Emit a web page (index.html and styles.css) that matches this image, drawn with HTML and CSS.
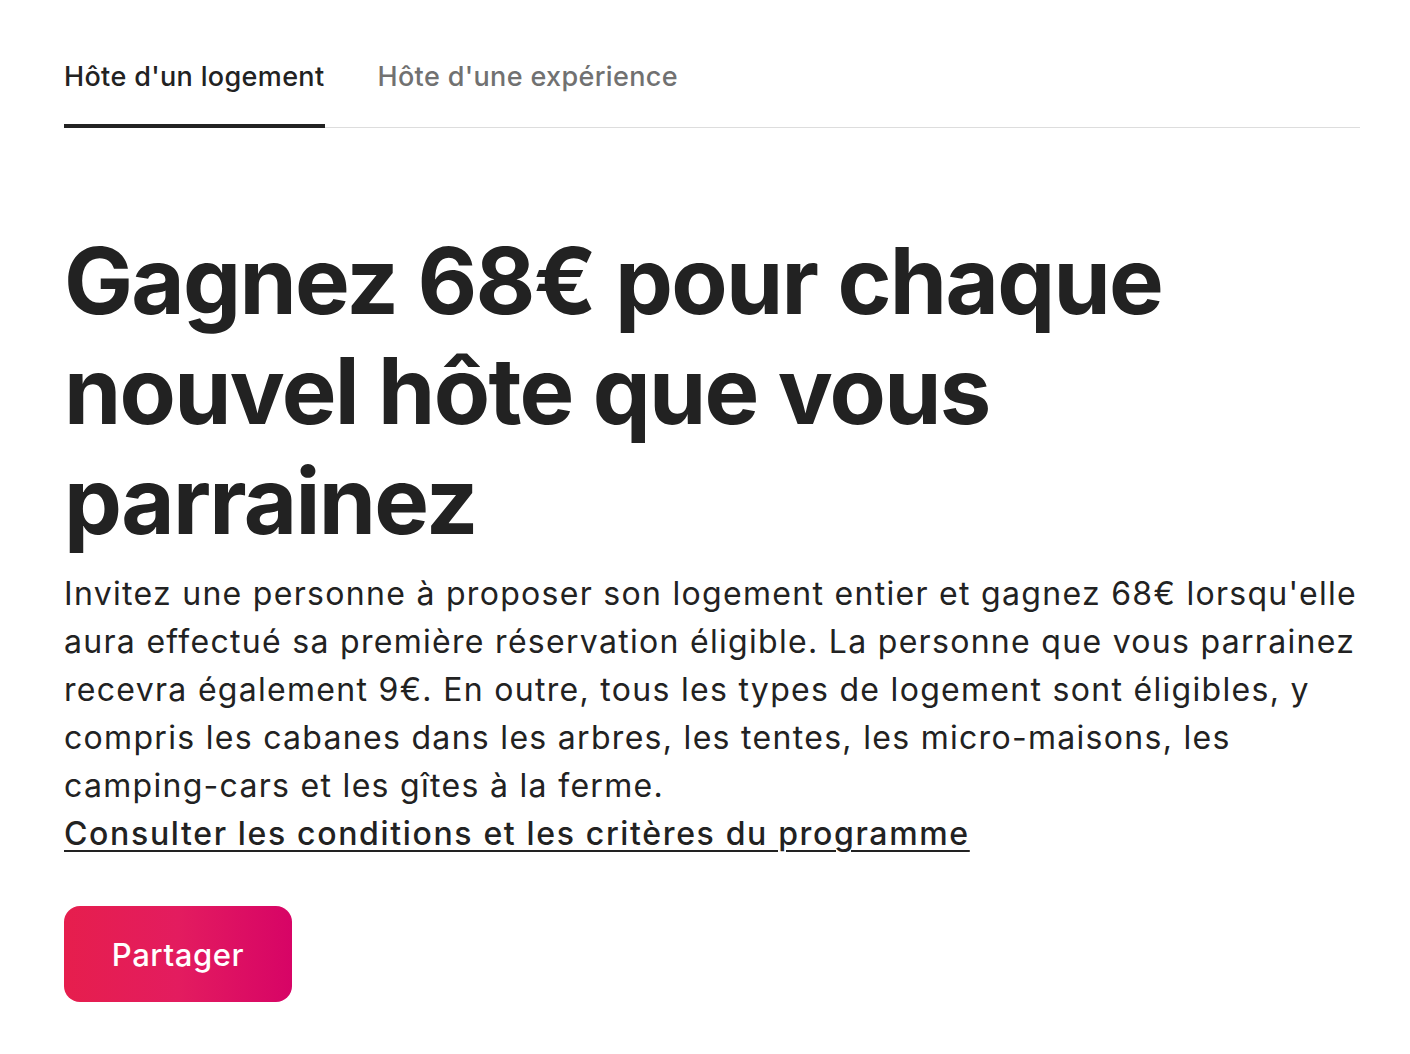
FILE: index.html
```html
<!DOCTYPE html>
<html lang="fr">
<head>
    <meta charset="UTF-8">
    <meta name="viewport" content="width=device-width, initial-scale=1.0">
    <title>Parrainage</title>
    <link rel="stylesheet" href="styles.css">
</head>
<body>
    <div class="page">
        <div class="tabs">
            <div class="tab active">Hôte d'un logement</div>
            <div class="tab">Hôte d'une expérience</div>
        </div>
        <h1 class="title">Gagnez 68€ pour chaque nouvel hôte que vous parrainez</h1>
        <p class="text">Invitez une personne à proposer son logement entier et gagnez 68€ lorsqu'elle aura effectué sa première réservation éligible. La personne que vous parrainez recevra également 9€. En outre, tous les types de logement sont éligibles, y compris les cabanes dans les arbres, les tentes, les micro-maisons, les camping-cars et les gîtes à la ferme.</p>
        <a class="terms" href="#">Consulter les conditions et les critères du programme</a>
        <div>
            <button class="share">Partager</button>
        </div>
    </div>
</body>
</html>
```

FILE: styles.css
```css
body {
    margin: 0;
    background: #fff;
    color: #222;
    font-family: Inter, "Noto Sans", sans-serif;
}
.page {
    padding: 48px 50px 0 64px;
}
.tabs {
    display: flex;
    gap: 53px;
    border-bottom: 1px solid #ddd;
}
.tab {
    font-size: 27px;
    font-weight: 500;
    letter-spacing: 0.35px;
    color: #717171;
    padding: 12px 0 31px;
    border-bottom: 4px solid transparent;
    margin-bottom: -1px;
}
.tab.active {
    color: #222;
    border-bottom-color: #222;
}
.title {
    margin: 98px 0 0;
    font-size: 92px;
    font-weight: 700;
    line-height: 110px;
    letter-spacing: -1.7px;
    max-width: 1150px;
}
.text {
    margin: 14px 0 0;
    font-size: 32px;
    line-height: 48px;
    letter-spacing: 1.3px;
    max-width: 1296px;
}
.terms {
    display: inline-block;
    font-size: 32px;
    line-height: 48px;
    font-weight: 500;
    letter-spacing: 1.65px;
    color: #222;
    text-decoration: underline;
    text-decoration-thickness: 2px;
    text-underline-offset: 5px;
}
.share {
    margin-top: 48px;
    width: 228px;
    height: 96px;
    border: none;
    border-radius: 16px;
    background: linear-gradient(to right, #e61e4d 0%, #e31c5f 50%, #d70466 100%);
    color: #fff;
    font-family: Inter, "Noto Sans", sans-serif;
    font-size: 31px;
    font-weight: 500;
    letter-spacing: 0.6px;
}
```
